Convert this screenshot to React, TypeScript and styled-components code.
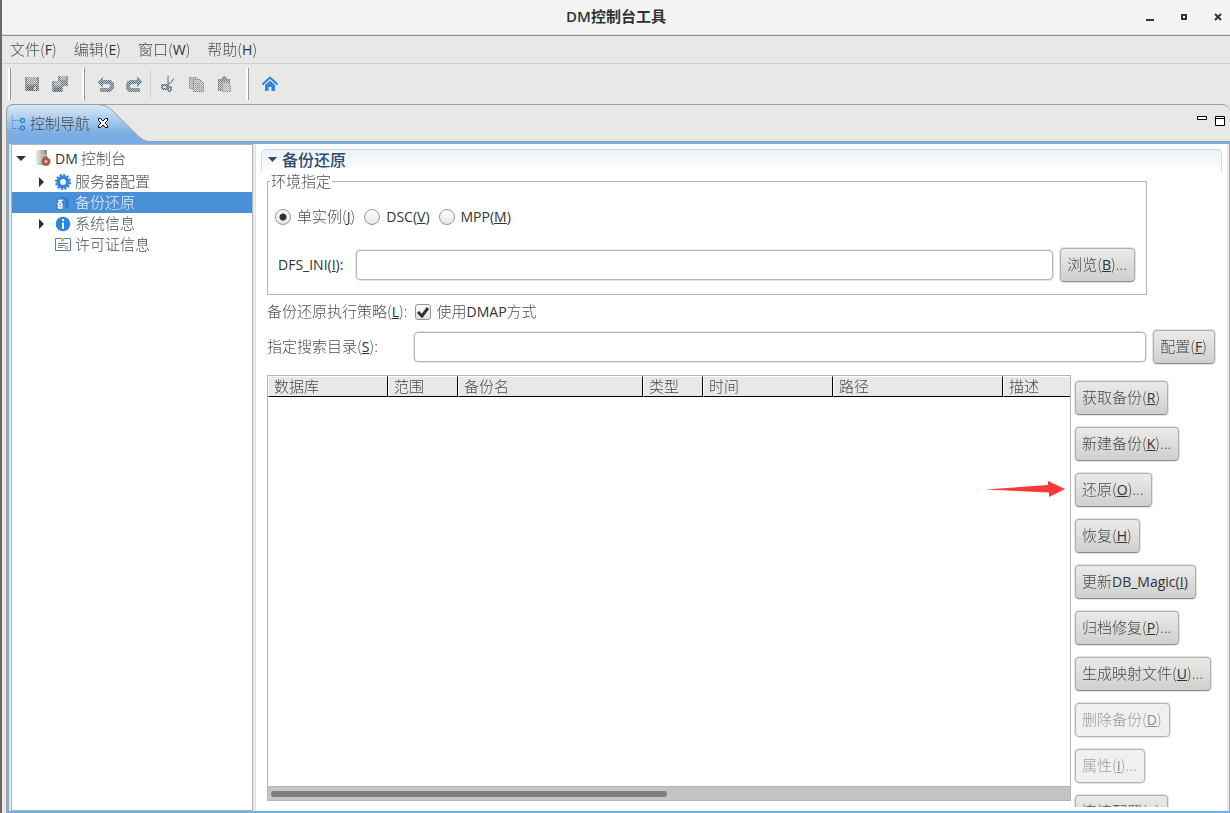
import React from "react";
import styled, { createGlobalStyle, css } from "styled-components";

const Global = createGlobalStyle`
  * { box-sizing: border-box; }
  body {
    margin: 0;
    background: #e8e8e7;
    color: #2e3436;
    font-family: "Open Sans", "Noto Sans CJK SC", sans-serif;
    font-size: 14px;
    line-height: 20px;
  }
  button, input { font: inherit; color: inherit; }
`;

const Han = styled.span`
  font-family: "Noto Sans CJK SC", sans-serif;
  font-size: 15px;
  font-weight: 300;
  opacity: 0.88;
`;

/* Splits a caption into Han and Latin runs and underlines the mnemonic marked by "&". */
function Caption({ text }: { text: string }) {
  const runs = text.match(/&[A-Z]|[A-Za-z_]+(\(&[A-Z]\))?:?|[^A-Za-z_&]+/g) ?? [];
  return (
    <span>
      {runs.map((run, i) => {
        const at = run.indexOf("&");
        if (at >= 0) {
          return (
            <React.Fragment key={i}>
              {run.slice(0, at)}
              <u>{run[at + 1]}</u>
              {run.slice(at + 2)}
            </React.Fragment>
          );
        }
        return /^[A-Za-z_]/.test(run) ? run : <Han key={i}>{run}</Han>;
      })}
    </span>
  );
}

const Window = styled.div`
  display: flex;
  flex-direction: column;
  height: 100vh;
  overflow: hidden;
  border-left: 2px solid #68686a;
`;

const TitleBar = styled.header`
  position: relative;
  flex: none;
  display: flex;
  align-items: center;
  justify-content: center;
  height: 36px;
  padding-bottom: 3px;
  background: #f3f3f3;
  border-bottom: 1px solid #8f8f88;
  box-shadow: inset 0 -1px 0 #dcdcda;
`;

const Title = styled.h1`
  margin: 0;
  font-size: 15px;
  line-height: 20px;
  font-weight: 600;
`;

const WindowButtons = styled.div`
  position: absolute;
  right: 0;
  top: 0;
  display: flex;
  gap: 10px;
`;

const PlainButton = styled.button`
  display: flex;
  align-items: center;
  justify-content: center;
  padding: 0;
  border: 0;
  background: none;
`;

const WindowButton = styled(PlainButton)`
  width: 24px;
  height: 34px;
`;

const MenuBar = styled.nav`
  flex: none;
  display: flex;
  gap: 17px;
  height: 28px;
  padding: 0 8px;
  border-bottom: 1px solid #cfcfcd;
`;

const MenuItem = styled(PlainButton)`
  white-space: nowrap;
`;

const Toolbar = styled.div`
  flex: none;
  display: flex;
  align-items: center;
  height: 40px;
  padding-left: 6px;
`;

const Grip = styled.span`
  width: 3px;
  height: 32px;
  margin-right: 7px;
  background: #ffffff;
  border-right: 1px solid #9a9a93;

  &:not(:first-child) { margin-left: 8px; }
`;

const ToolDivider = styled.span`
  width: 1px;
  height: 28px;
  margin: 0 3px 0 2px;
  background: #cfcfcd;
`;

const ToolButton = styled(PlainButton)`
  width: 28px;
  height: 32px;
`;

const Folder = styled.main`
  flex: 1;
  min-height: 0;
  display: flex;
  flex-direction: column;
  margin-left: 4px;
  border: 1px solid #a0a09b;
  border-width: 1px 0 0 1px;
  border-radius: 8px 8px 0 0;
`;

const TabRow = styled.div`
  flex: none;
  display: flex;
  justify-content: space-between;
  height: 37px;
  border-bottom: 1px solid #a0a09b;
`;

const Tab = styled.div`
  position: relative;
  display: flex;
  align-items: center;
  gap: 5px;
  width: 144px;
  padding-left: 4px;
`;

const TabShape = styled.svg`
  position: absolute;
  left: -1px;
  top: -1px;
`;

const TabLabel = styled.span`
  position: relative;
  display: flex;
  align-items: center;
  gap: 3px;
`;

const TabClose = styled(PlainButton)`
  position: relative;
  width: 16px;
  height: 16px;
`;

const ViewButtons = styled.div`
  display: flex;
  gap: 6px;
  padding: 8px 4px;
`;

const ViewButton = styled(PlainButton)`
  width: 12px;
  height: 16px;
`;

const Panes = styled.div`
  flex: 1;
  min-height: 0;
  display: flex;
  gap: 3px;
  border: 2px solid #7aade3;
  border-right-width: 1px;
  padding: 0 2px;
`;

const Tree = styled.ul`
  flex: none;
  width: 242px;
  margin: 0;
  padding: 0;
  list-style: none;
  background: #ffffff;
  border: 1px solid #b4b4b0;
`;

const TreeRow = styled.li<{ $root?: boolean; $selected?: boolean }>`
  display: flex;
  align-items: center;
  gap: 4px;
  height: ${(p) => (p.$root ? "26px" : "21px")};
  padding-left: ${(p) => (p.$root ? "3px" : "23px")};
  ${(p) => p.$selected && css`
    background: #4a90d9;
    color: #ffffff;
  `}
`;

const Twisty = styled.svg`
  width: 12px;
  height: 12px;
  margin-right: 4px;
`;

const Editor = styled.section`
  flex: 1;
  min-width: 0;
  display: flex;
  flex-direction: column;
  padding: 5px 5px 4px;
  background: #ffffff;
`;

const SectionHeader = styled.h2`
  flex: none;
  display: flex;
  align-items: center;
  gap: 5px;
  height: 22px;
  margin: 0;
  padding: 0 0 2px 6px;
  border: 1px solid #c9dbee;
  border-width: 1px 1px 0;
  border-radius: 5px 5px 0 0;
  background: linear-gradient(#e9f1fa, #ffffff);
  color: #2a4a70;
  font-size: 16px;
  line-height: 20px;
  font-weight: 500;
`;

const Form = styled.form`
  flex: 1;
  min-height: 0;
  display: flex;
  flex-direction: column;
  padding: 0 6px;
`;

const Group = styled.fieldset`
  flex: none;
  min-width: 0;
  margin: 0 69px 0 0;
  padding: 15px 10px 11px 7px;
  border: 1px solid #b4b4b0;
`;

const Legend = styled.legend`
  height: 20px;
  padding: 0 1px;
  margin-left: -5px;
`;

const RadioRow = styled.div`
  display: flex;
  align-items: center;
  gap: 9px;
  margin-bottom: 20px;
`;

const Choice = styled.label`
  display: flex;
  align-items: center;
  gap: 6px;
  white-space: nowrap;
`;

const Radio = styled.input`
  appearance: none;
  width: 16px;
  height: 16px;
  margin: 0;
  border: 1px solid #96968f;
  border-radius: 50%;
  background: linear-gradient(#ffffff, #e6e6e4);

  &:checked {
    background: radial-gradient(circle, #2e3436 0 3px, transparent 4px), linear-gradient(#ffffff, #e6e6e4);
  }
`;

const Checkbox = styled.span`
  position: relative;
  display: flex;
  width: 16px;
  height: 16px;

  input {
    appearance: none;
    width: 16px;
    height: 16px;
    margin: 0;
    border: 1px solid #96968f;
    border-radius: 3px;
    background: linear-gradient(#ffffff, #dededc);
  }
  svg {
    position: absolute;
    inset: 0;
    display: none;
    pointer-events: none;
  }
  input:checked + svg { display: block; }
`;

const FieldRow = styled.div`
  flex: none;
  display: flex;
  align-items: center;
  gap: 6px;
`;

const DirLabel = styled.label`
  width: 141px;
  padding-bottom: 2px;
`;

const IniLabel = styled.label`
  min-width: 75px;
  padding-left: 3px;
`;

const TextBox = styled.input`
  flex: 1;
  min-width: 0;
  height: 30px;
  padding: 0 6px;
  background: #ffffff;
  border: 1px solid #b4b4b0;
  border-radius: 4px;
  box-shadow: 0 0 0 1px #e8e8e7;
`;

const PushButton = styled.button`
  flex: none;
  height: 34px;
  margin: 1px;
  padding: 0 7px 2px 6px;
  border: 1px solid #b0b0ab;
  border-bottom-color: #8f8f88;
  border-radius: 4px;
  background: linear-gradient(#ebebea, #cfcfcd);
  box-shadow: 0 0 0 1px #e4e4e2;
  white-space: nowrap;

  &:disabled {
    border-color: #b4b4b0;
    background: #f0f0f0;
    color: #8e9192;
  }
`;

const PolicyRow = styled(FieldRow)`
  gap: 7px;
  height: 34px;
  padding-bottom: 1px;
`;

const Results = styled.div`
  flex: 1;
  min-height: 0;
  display: flex;
  gap: 3px;
  margin-top: 10px;
`;

const TableFrame = styled.div`
  flex: 1;
  min-width: 0;
  display: flex;
  flex-direction: column;
  justify-content: space-between;
  margin-bottom: 6px;
  border: 1px solid #b4b4b0;
`;

const BackupTable = styled.table`
  width: 100%;
  table-layout: fixed;
  border-collapse: separate;
  border-spacing: 0;

  th {
    height: 21px;
    padding: 0 5px;
    text-align: left;
    line-height: 18px;
    background: #e8e8e7;
    border-top: 1px solid #ffffff;
    border-left: 1px solid #ffffff;
    border-right: 1px solid #000000;
    border-bottom: 1px solid #000000;
    overflow: hidden;
    white-space: nowrap;
  }
  th:last-child { border-right: 0; }
`;

const ScrollTrack = styled.div`
  height: 14px;
  padding: 4px 8px 4px 3px;
  border-top: 1px solid #b4b4b0;
  background: #c3c4c3;
`;

const ScrollThumb = styled.div`
  width: 50%;
  height: 6px;
  border-radius: 3px;
  background: #7a7f7f;
`;

const Actions = styled.div`
  position: relative;
  display: flex;
  flex-direction: column;
  align-items: flex-start;
  gap: 10px;
  width: 142px;
  padding-top: 5px;
  overflow: hidden;
`;

const Arrow = styled.svg`
  position: absolute;
  right: 100%;
  top: 105px;
  margin-right: 9px;
`;

const ActionsArea = styled.div`
  position: relative;
  display: flex;
`;

/* Disabled toolbar drawings are stippled through a checkerboard mask. */
function Stippled({ children }: { children: React.ReactNode }) {
  return (
    <svg width="16" height="16" viewBox="0 0 16 16" shapeRendering="crispEdges">
      <defs>
        <pattern id="dots" width="2" height="2" patternUnits="userSpaceOnUse">
          <rect width="2" height="2" fill="#555" />
          <rect width="1" height="1" fill="#fff" />
          <rect x="1" y="1" width="1" height="1" fill="#fff" />
        </pattern>
        <mask id="stipple"><rect width="16" height="16" fill="url(#dots)" /></mask>
      </defs>
      <g mask="url(#stipple)">{children}</g>
    </svg>
  );
}

const Floppy = () => (
  <>
    <path d="M1 1h14v14H1z" fill="#6d7681" />
    <path d="M3 1h10v7H3z" fill="#9aa0a6" />
    <path d="M3 10h10v5H3z" fill="#50555c" />
    <path d="M10 11h2v3h-2z" fill="#d8d8d8" />
  </>
);

const SaveIcon = () => <Stippled><Floppy /></Stippled>;
const SaveAllIcon = () => (
  <Stippled>
    <path d="M6 0h10v10H6z" fill="#6d7681" />
    <path d="M8 0h6v4H8z" fill="#9aa0a6" />
    <path d="M0 5h11v11H0z" fill="#6d7681" />
    <path d="M2 5h7v5H2z" fill="#9aa0a6" />
    <path d="M2 12h7v4H2z" fill="#50555c" />
  </Stippled>
);
const undoPath = "M5 0v3h5c4 0 6 2 6 6s-2 6-6 6H2v-4h8c1.500 0 2-.8 2-2s-.5-2-2-2H5v3H4L0 5.500V4.500L4 0z";
const UndoIcon = () => <Stippled><path d={undoPath} transform="translate(0 1)" fill="#5c7688" /></Stippled>;
const RedoIcon = () => <Stippled><path d={undoPath} transform="matrix(-1 0 0 1 16 1)" fill="#5c7688" /></Stippled>;
const CutIcon = () => (
  <Stippled>
    <path d="M7 0h2v6l4-4h1v2L9 10 7 8z" fill="#7c8894" />
    <g fill="none" stroke="#4d6375" strokeWidth="2">
      <ellipse cx="4.500" cy="11" rx="2.500" ry="2" />
      <ellipse cx="9.500" cy="13" rx="2" ry="2" />
      <path d="M6 10l3-2" />
    </g>
  </Stippled>
);
const CopyIcon = () => (
  <Stippled>
    <path d="M1.500 1.500h7l3 3v8h-10z" fill="#b0aca2" stroke="#8a8474" />
    <path d="M5.500 3.500h6l3.500 3.500v8.500H5.500z" fill="#b5b8bb" stroke="#777e85" />
    <path d="M7 7h5M7 9h7M7 11h7M7 13h7" stroke="#8d9398" />
  </Stippled>
);
const PasteIcon = () => (
  <Stippled>
    <path d="M2.500 3.500h11v11h-11z" fill="#96908a" stroke="#78736a" />
    <path d="M8 0l4 3v2H4V3z" fill="#76797d" />
    <path d="M6.500 6.500h5l3 3v6h-8z" fill="#b5b8bb" stroke="#848a90" />
  </Stippled>
);
const HomeIcon = () => (
  <svg width="16" height="16" viewBox="0 0 16 16">
    <path d="M.5 8.500L8 1.500l7.500 7" stroke="#2e86dc" strokeWidth="2" fill="none" />
    <path d="M8 4.500l5 4.500v6H9.500v-4h-3v4H3V9z" fill="#2e86dc" />
  </svg>
);

const NavIcon = () => (
  <svg width="16" height="18" viewBox="0 0 16 18" fill="none" stroke="#2e86dc">
    <path d="M1.500 2v14M2 6.500h7M2 14.500h7" strokeDasharray="1 1" />
    <circle cx="11.500" cy="6.500" r="2" strokeWidth="1.500" />
    <circle cx="11.500" cy="14" r="2" strokeWidth="1.500" />
  </svg>
);
const ServerIcon = () => (
  <svg width="16" height="16" viewBox="0 0 16 16">
    <defs>
      <linearGradient id="steel"><stop stopColor="#eeeeee" /><stop offset="1" stopColor="#858585" /></linearGradient>
    </defs>
    <path d="M1 0h11v15H1z" fill="url(#steel)" />
    <path d="M1 5h11M1 10h11" stroke="#d8d8d8" strokeWidth="1" />
    <circle cx="11" cy="11.500" r="3" fill="#c98a6c" stroke="#a15a3c" strokeWidth="2" />
    <circle cx="11" cy="11.500" r="4.300" fill="none" stroke="#a15a3c" strokeDasharray="1.700 1.700" />
    <circle cx="11" cy="11.500" r="1" fill="#eed9ce" />
  </svg>
);
const GearIcon = () => (
  <svg width="16" height="16" viewBox="0 0 16 16" fill="none" stroke="#2e86dc">
    <circle cx="8" cy="8" r="4.700" strokeWidth="3.600" />
    <circle cx="8" cy="8" r="7" strokeWidth="2" strokeDasharray="2.200 1.465" />
  </svg>
);
const BackupIcon = () => (
  <svg width="16" height="16" viewBox="0 0 16 16">
    <path d="M5 1l9 2v10l-4 1V5L5 3z" fill="#2e7fd0" />
    <path d="M1 3l8 2v10H1z" fill="#3a86d2" />
    <path d="M3 5.500h4L3.500 8H7M3.500 13V9.500L5 11l2-1.500V13z" fill="none" stroke="#fff" strokeWidth="1.300" />
  </svg>
);
const InfoIcon = () => (
  <svg width="16" height="16" viewBox="0 0 16 16">
    <circle cx="8" cy="8" r="7.300" fill="#2e86dc" />
    <path d="M7 3h2v2H7zM7 6.500h2V13H7z" fill="#fff" />
  </svg>
);
const LicenceIcon = () => (
  <svg width="16" height="16" viewBox="0 0 16 16">
    <path d="M.5 1.500h15v12H.500z" fill="#fff" stroke="#5f7fae" />
    <path d="M3 6.500h10M3 8.500h7M3 10.500h5" stroke="#5f7fae" />
    <path d="M6 1h3v4L7.500 4 6 5z" fill="#f0b429" />
    <circle cx="11.500" cy="10.500" r="1.300" fill="none" stroke="#e06363" />
  </svg>
);

const treeItems = [
  { label: "DM 控制台", icon: <ServerIcon />, twisty: "M1 4h10l-5 5z", root: true },
  { label: "服务器配置", icon: <GearIcon />, twisty: "M4 1v10l5-5z" },
  { label: "备份还原", icon: <BackupIcon />, selected: true },
  { label: "系统信息", icon: <InfoIcon />, twisty: "M4 1v10l5-5z" },
  { label: "许可证信息", icon: <LicenceIcon /> },
];

const columns = [
  { name: "数据库", width: 120 },
  { name: "范围", width: 70 },
  { name: "备份名", width: 185 },
  { name: "类型", width: 60 },
  { name: "时间", width: 130 },
  { name: "路径", width: 170 },
  { name: "描述" },
];

const actions = [
  { text: "获取备份(&R)" },
  { text: "新建备份(&K)..." },
  { text: "还原(&O)..." },
  { text: "恢复(&H)" },
  { text: "更新DB_Magic(&I)" },
  { text: "归档修复(&P)..." },
  { text: "生成映射文件(&U)..." },
  { text: "删除备份(&D)", disabled: true },
  { text: "属性(&I)...", disabled: true },
  { text: "连接配置(&C)" },
];

export default function App() {
  return (
    <Window>
      <Global />
      <TitleBar>
        <Title>DM控制台工具</Title>
        <WindowButtons>
          <WindowButton aria-label="最小化">
            <svg width="8" height="8"><path d="M0 6h8v2H0z" fill="#2e3436" /></svg>
          </WindowButton>
          <WindowButton aria-label="最大化">
            <svg width="6" height="6"><path d="M1 1h4v4H1z" fill="none" stroke="#2e3436" strokeWidth="2" /></svg>
          </WindowButton>
          <WindowButton aria-label="关闭">
            <svg width="8" height="8"><path d="M1 1l6 6M7 1L1 7" stroke="#2e3436" strokeWidth="2" /></svg>
          </WindowButton>
        </WindowButtons>
      </TitleBar>
      <MenuBar>
        {["文件(F)", "编辑(E)", "窗口(W)", "帮助(H)"].map((m) => (
          <MenuItem key={m}><Caption text={m} /></MenuItem>
        ))}
      </MenuBar>
      <Toolbar>
        <Grip />
        <ToolButton disabled aria-label="保存"><SaveIcon /></ToolButton>
        <ToolButton disabled aria-label="全部保存"><SaveAllIcon /></ToolButton>
        <Grip />
        <ToolButton disabled aria-label="撤销"><UndoIcon /></ToolButton>
        <ToolButton disabled aria-label="重做"><RedoIcon /></ToolButton>
        <ToolDivider />
        <ToolButton disabled aria-label="剪切"><CutIcon /></ToolButton>
        <ToolButton disabled aria-label="复制"><CopyIcon /></ToolButton>
        <ToolButton disabled aria-label="粘贴"><PasteIcon /></ToolButton>
        <Grip />
        <ToolButton aria-label="主页"><HomeIcon /></ToolButton>
      </Toolbar>
      <Folder>
        <TabRow>
          <Tab>
            <TabShape width="144" height="40">
              <defs>
                <linearGradient id="tab" x2="0" y2="1">
                  <stop stopColor="#dbe9f8" />
                  <stop offset=".75" stopColor="#7aade3" />
                </linearGradient>
              </defs>
              <path d="M.5 40V8Q.5.500 8 .500H90C100 .500 104 4 110 10L130 30C136 36 140 37.500 144 37.500V40z" fill="url(#tab)" />
              <path d="M.5 40V8Q.5.500 8 .500H90C100 .500 104 4 110 10L130 30C136 36 140 37.500 144 37.500" fill="none" stroke="#a0a09b" />
            </TabShape>
            <TabLabel><NavIcon /><Caption text="控制导航" /></TabLabel>
            <TabClose aria-label="关闭视图">
              <svg width="12" height="12" viewBox="0 0 12 12">
                <path d="M1.500 1.500h2l2.500 2.500 2.500-2.500h2v2L8 6l2.500 2.500v2h-2L6 8l-2.500 2.500h-2v-2L4 6 1.500 3.500z" fill="#fff" stroke="#000" />
              </svg>
            </TabClose>
          </Tab>
          <ViewButtons>
            <ViewButton aria-label="最小化视图">
              <svg width="12" height="12"><path d="M1.500 1.500h9v3h-9z" fill="#fff" stroke="#000" /></svg>
            </ViewButton>
            <ViewButton aria-label="最大化视图">
              <svg width="12" height="12"><path d="M1.500 1.500h9v9h-9zM1.500 3.500h9" fill="#fff" stroke="#000" /></svg>
            </ViewButton>
          </ViewButtons>
        </TabRow>
        <Panes>
          <Tree>
            {treeItems.map((item) => (
              <TreeRow key={item.label} $root={item.root} $selected={item.selected}>
                <Twisty>{item.twisty && <path d={item.twisty} fill="#2e3436" />}</Twisty>
                {item.icon}
                <Caption text={item.label} />
              </TreeRow>
            ))}
          </Tree>
          <Editor>
            <SectionHeader>
              <svg width="9" height="5"><path d="M0 0h9L4.500 5z" fill="#2a4a70" /></svg>
              备份还原
            </SectionHeader>
            <Form onSubmit={(e) => e.preventDefault()}>
              <Group>
                <Legend><Caption text="环境指定" /></Legend>
                <RadioRow>
                  <Choice><Radio type="radio" name="mode" defaultChecked /><Caption text="单实例(&J)" /></Choice>
                  <Choice><Radio type="radio" name="mode" /><Caption text="DSC(&V)" /></Choice>
                  <Choice><Radio type="radio" name="mode" /><Caption text="MPP(&M)" /></Choice>
                </RadioRow>
                <FieldRow>
                  <IniLabel htmlFor="ini"><Caption text="DFS_INI(&I):" /></IniLabel>
                  <TextBox id="ini" />
                  <PushButton type="button"><Caption text="浏览(&B)..." /></PushButton>
                </FieldRow>
              </Group>
              <PolicyRow>
                <Caption text="备份还原执行策略(&L):" />
                <Choice>
                  <Checkbox>
                    <input type="checkbox" defaultChecked />
                    <svg width="16" height="16"><path d="M3 8l4 4 6-8" fill="none" stroke="#2e3436" strokeWidth="3" /></svg>
                  </Checkbox>
                  <Caption text="使用DMAP方式" />
                </Choice>
              </PolicyRow>
              <FieldRow>
                <DirLabel htmlFor="dir"><Caption text="指定搜索目录(&S):" /></DirLabel>
                <TextBox id="dir" />
                <PushButton type="button"><Caption text="配置(&F)" /></PushButton>
              </FieldRow>
              <Results>
                <TableFrame>
                  <BackupTable>
                    <colgroup>
                      {columns.map((c) => <col key={c.name} width={c.width} />)}
                    </colgroup>
                    <thead>
                      <tr>{columns.map((c) => <th key={c.name} scope="col"><Caption text={c.name} /></th>)}</tr>
                    </thead>
                  </BackupTable>
                  <ScrollTrack><ScrollThumb /></ScrollTrack>
                </TableFrame>
                <ActionsArea>
                  <Arrow width="80" height="18" viewBox="0 0 80 18">
                    <path d="M0 9.500L63 5V1l17 8-16 8v-4.500z" fill="#fb3838" />
                  </Arrow>
                  <Actions>
                    {actions.map((a) => (
                      <PushButton key={a.text} type="button" disabled={a.disabled}><Caption text={a.text} /></PushButton>
                    ))}
                  </Actions>
                </ActionsArea>
              </Results>
            </Form>
          </Editor>
        </Panes>
      </Folder>
    </Window>
  );
}
